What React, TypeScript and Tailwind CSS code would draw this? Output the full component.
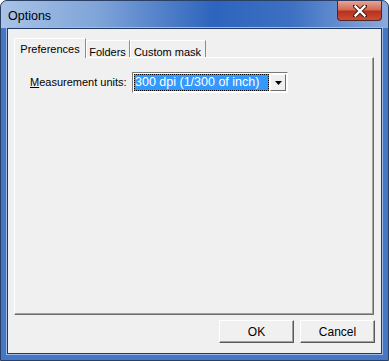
import { ReactNode } from "react";

function Tab({ label, width, active }: { label: string; width: string; active?: boolean }) {
  if (active) {
    return (
      <div className={`relative z-10 flex h-[20px] ${width} items-start justify-center border-l border-t border-r border-l-white border-t-white border-r-[#8c8c8c] bg-[#f0f0f0] pt-[2px]`}>
        <span>{label}</span>
      </div>
    );
  }
  return (
    <div className={`flex h-[18px] ${width} items-start justify-center border-t border-r border-t-white border-r-[#8c8c8c] bg-[#f0f0f0] pt-[3px] shadow-[inset_1px_0_0_#ffffff]`}>
      <span>{label}</span>
    </div>
  );
}

function Button({ children }: { children: ReactNode }) {
  return (
    <div className="flex h-[23px] w-[75px] items-center justify-center border border-t-white border-l-white border-r-[#5a5a5a] border-b-[#5a5a5a] bg-[#f0f0f0] text-[12px] shadow-[inset_-1px_-1px_0_#a0a0a0]">
      {children}
    </div>
  );
}

export default function App() {
  return (
    <div
      className="h-[361px] w-[389px] overflow-hidden rounded-t-[7px] border border-[#2a3f63] bg-[#4677c4] text-[11px] text-black"
      style={{ fontFamily: '"Liberation Sans", Arial, sans-serif' }}
    >
      <div className="flex h-[27px] items-start bg-[linear-gradient(90deg,#a9c3e6_0%,#7fa4d8_25%,#2d64bd_55%,#3d70c2_75%,#8aabdc_100%)]">
        <div className="pl-[7px] pt-[6px] text-[12.5px] text-black">Options</div>
        <div className="flex-1" />
        <div className="mr-[6px] flex h-[20px] w-[45px] items-center justify-center rounded-b-[4px] border border-t-0 border-[#5b2320] bg-[linear-gradient(180deg,#e7a596_0%,#d46a55_45%,#b7321f_55%,#cb4e33_100%)]">
          <svg width="14" height="12" viewBox="0 0 14 12">
            <path d="M2 1 L12 11 M12 1 L2 11" stroke="#3a1a18" strokeWidth="4.2" strokeLinecap="square" />
            <path d="M2.5 1.5 L11.5 10.5 M11.5 1.5 L2.5 10.5" stroke="#ffffff" strokeWidth="2.4" strokeLinecap="square" />
          </svg>
        </div>
      </div>
      <div className="mx-[6px] h-[326px] border border-[#1f3a66] bg-[#f0f0f0] shadow-[0_0_0_1px_#9fbbe6]">
        <div className="flex h-full flex-col pl-[6px] pr-[6px] pt-[9px]">
          <div className="-mb-[1px] flex items-end">
            <Tab label="Preferences" width="w-[72px]" active />
            <Tab label="Folders" width="w-[44px]" />
            <Tab label="Custom mask" width="w-[76px]" />
          </div>
          <div className="h-[258px] w-[360px] border border-t-white border-l-white border-r-[#6e6e6e] border-b-[#6e6e6e] bg-[#f0f0f0] shadow-[inset_-1px_-1px_0_#a0a0a0]">
            <div className="flex items-center pl-[15px] pt-[14px]">
              <span className="w-[102px] whitespace-nowrap">
                <span className="underline">M</span>easurement units:
              </span>
              <div className="flex h-[21px] w-[156px] items-center border border-t-[#7a7a7a] border-l-[#7a7a7a] border-r-white border-b-white bg-white p-[1px]">
                <div className="flex h-full flex-1 items-center whitespace-nowrap bg-[#3399ff] pl-[1px] text-[12.5px] text-white outline-1 outline-dotted outline-offset-[-1px] outline-black">
                  300 dpi (1/300 of inch)
                </div>
                <div className="ml-[1px] flex h-full w-[16px] items-center justify-center border border-t-white border-l-white border-r-[#6e6e6e] border-b-[#6e6e6e] bg-[#f0f0f0]">
                  <svg width="7" height="4" viewBox="0 0 7 4">
                    <path d="M0 0 H7 L3.5 4 Z" fill="#000" />
                  </svg>
                </div>
              </div>
            </div>
          </div>
          <div className="flex justify-end gap-[6px] pt-[5px]">
            <Button>OK</Button>
            <Button>Cancel</Button>
          </div>
        </div>
      </div>
    </div>
  );
}
